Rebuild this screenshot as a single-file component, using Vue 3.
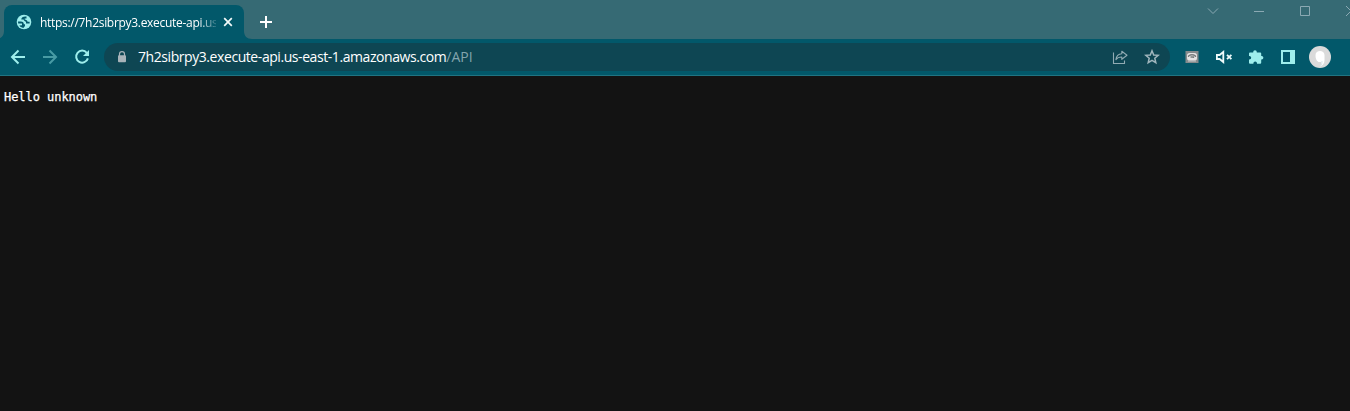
<script setup>
const host = '7h2sibrpy3.execute-api.us-east-1.amazonaws.com'
</script>

<template>
  <div class="browser">
    <header class="tabstrip">
      <div class="tab">
        <svg class="globe" width="16" height="16" viewBox="0 0 16 16">
          <circle cx="8" cy="8" r="7.300" fill="#9eeeec" />
          <path d="M2 7.600H4.800C7 7.600 7.800 8.600 7.800 10.300H9V12L7.300 14C5.500 13.600 4.200 12.800 3.300 11.500L6 11.300V9.500H2.200Z" fill="#02586a" />
          <path d="M10.500 2.500C7.200 2.200 5.300 3.400 5.300 5.500H7.600C8.200 7 9 7.300 10 7.700V9.600H13.600V7.700H11.600C11.200 6.300 10.300 5.800 8.700 5.500V4.500H10.500Z" fill="#02586a" />
        </svg>
        <span class="title">https://7h2sibrpy3.execute-api.us</span>
        <svg class="close" width="10" height="10" viewBox="0 0 10 10">
          <path d="M1.200 1.200 8.800 8.800M8.800 1.200 1.200 8.800" stroke="#f3fafa" stroke-width="1.700" />
        </svg>
        <svg class="flare" width="8" height="8" viewBox="0 0 8 8"><path d="M0 0C0 5 3 8 8 8H0Z" fill="#02586a" /></svg>
        <svg class="flare left" width="8" height="8" viewBox="0 0 8 8"><path d="M8 0C8 5 5 8 0 8H8Z" fill="#02586a" /></svg>
      </div>
      <svg class="plus" width="12" height="12" viewBox="0 0 12 12">
        <path d="M6 0V12M0 6H12" stroke="#fff" stroke-width="2" />
      </svg>
      <div class="controls">
        <svg width="12" height="12" viewBox="0 0 12 12"><path d="M1 3.500 6 8.500 11 3.500" /></svg>
        <svg width="12" height="12" viewBox="0 0 12 12"><path d="M1 6.500H11" /></svg>
        <svg width="12" height="12" viewBox="0 0 12 12"><path d="M1.500 1.500H10.500V10.500H1.500Z" /></svg>
        <svg width="12" height="12" viewBox="0 0 12 12"><path d="M1 1 11 11M11 1 1 11" /></svg>
      </div>
    </header>

    <nav class="toolbar">
      <div class="navigation">
        <svg width="16" height="16" viewBox="0 0 16 16"><path d="M15 8H2.500M8.500 1.500 2 8l6.500 6.500" /></svg>
        <svg class="dim" width="16" height="16" viewBox="0 0 16 16"><path d="M1 8H13.500M7.500 1.500 14 8l-6.500 6.500" /></svg>
        <svg width="16" height="16" viewBox="0 0 16 16">
          <path d="M12.800 3.800A6 6 0 1 0 13.900 9.400" />
          <path class="solid" d="M15 1V7H9Z" />
        </svg>
      </div>
      <div class="address">
        <svg class="lock" width="10" height="12" viewBox="0 0 10 12">
          <path d="M2.500 5V3a2.500 2.400 0 0 1 5 0v2" fill="none" stroke="#a8b3b9" stroke-width="1.200" />
          <rect x="1" y="4.300" width="8" height="7" rx="1" fill="#a8b3b9" />
        </svg>
        <span class="host">{{ host }}</span><span class="path">/API</span>
        <svg class="share" width="16" height="16" viewBox="0 0 16 16" fill="none" stroke="#91abb3" stroke-width="1.100">
          <path d="M1.500 3.500V14.500H12.500V11.500" />
          <path d="M9.800 2.200 15 6.200 9.800 10.300V8C7 8 5.200 8.700 3.900 10.600 4.300 7.200 6.300 5 9.800 4.700Z" stroke-linejoin="round" />
        </svg>
        <svg class="star" width="16" height="16" viewBox="0 0 16 16">
          <path d="M8 1.800 9.700 6 14.200 6.300 10.800 9.200 11.800 13.700 8 11.300 4.200 13.700 5.200 9.200 1.800 6.300 6.300 6Z" fill="none" stroke="#a0b6bd" stroke-width="1.500" />
        </svg>
      </div>
      <div class="actions">
        <svg width="16" height="16" viewBox="0 0 16 16">
          <rect x="1.500" y="2" width="13" height="12" fill="#858b8d" />
          <rect x="3" y="4" width="10" height="7.500" rx="2.500" fill="#e4e4e4" />
          <path d="M4.500 8V7Q8 4.500 11.500 7v1M6.500 8h3v1" fill="none" stroke="#777d7e" stroke-width="1.300" />
          <path d="M4 12h8" stroke="#c8cbcc" />
        </svg>
        <svg width="18" height="16" viewBox="0 0 18 16" fill="none" stroke="#eefafa" stroke-width="1.800">
          <path d="M1.900 6v4h2.700L8.300 13V3L4.600 6Z" />
          <path d="M12 5.800 16.400 10.200M16.400 5.800 12 10.200" />
        </svg>
        <svg width="16" height="16" viewBox="0 0 16 16">
          <path d="M2 3.500H5.200V3a1.800 1.800 0 0 1 3.600 0v.5h3.400a1 1 0 0 1 1 1V7H13.700a1.700 1.700 0 0 1 0 3.400h-.5v3.400a1 1 0 0 1-1 1H9v-.6a1.800 1.800 0 0 0-3.600 0v.6H2a1 1 0 0 1-1-1v-3.200h.4a1.800 1.800 0 0 0 0-3.600H1V4.500a1 1 0 0 1 1-1Z" fill="#9eeeec" />
        </svg>
        <svg width="16" height="16" viewBox="0 0 16 16">
          <path d="M1 1H15V15H1ZM3 3V13H10V3Z" fill="#9eeeec" fill-rule="evenodd" />
        </svg>
        <svg width="22" height="22" viewBox="0 0 22 22">
          <circle cx="11" cy="11" r="11" fill="#dadada" />
          <path d="M6.500 9C6.500 3.500 15.500 3.500 15.500 9V14C15.500 17 14 19.500 11 20.500 12 19 12.200 17.500 12 16H9.500C7 14.500 6.500 12 6.500 9Z" fill="#fff" />
          <path d="M11.500 20Q13.200 18.500 13 15" fill="none" stroke="#d4dee3" stroke-width="0.800" />
        </svg>
      </div>
    </nav>

    <main class="page"><pre>Hello unknown</pre></main>
  </div>
</template>

<style>
html, body { background: #131313; overflow: hidden; }
</style>

<style scoped>
.browser {
  width: 100%;
  height: 411px;
  display: flex;
  flex-direction: column;
  overflow: hidden;
  background: #131313;
  font-family: "Open Sans", "Noto Sans", sans-serif;
}
svg { display: block; flex: none; }
.tabstrip {
  height: 39px;
  flex: none;
  display: flex;
  align-items: flex-start;
  padding-left: 4px;
  background: #366a74;
}
.tab {
  position: relative;
  box-sizing: border-box;
  width: 240px;
  height: 34px;
  margin-top: 5px;
  padding-left: 12px;
  display: flex;
  align-items: center;
  border-radius: 8px 8px 0 0;
  background: #02586a;
}
.title {
  width: 176px;
  margin-left: 8px;
  white-space: nowrap;
  color: #fff;
  font-size: 12px;
  letter-spacing: -0.3px;
  mask-image: linear-gradient(to right, #000 158px, transparent 180px);
}
.close { margin-left: 7px; }
.flare { position: absolute; right: -8px; bottom: 0; }
.flare.left { right: auto; left: -8px; }
.plus { margin: 16px 0 0 16px; }
.controls {
  display: flex;
  gap: 34px;
  margin: 5px -7px 0 auto;
  fill: none;
  stroke: #8ba9b3;
  stroke-width: 1;
}
.toolbar {
  box-sizing: border-box;
  height: 37px;
  flex: none;
  display: flex;
  align-items: center;
  padding: 0 19px 0 10px;
  border-bottom: 1px solid #207482;
  background: #02586a;
}
.navigation {
  display: flex;
  gap: 16px;
  fill: none;
  stroke: #9eeeec;
  stroke-width: 2;
}
.dim { opacity: 0.45; }
.solid { fill: #9eeeec; stroke: none; }
.address {
  box-sizing: border-box;
  width: 1066px;
  height: 28px;
  margin-left: 14px;
  padding: 0 10px 0 13px;
  display: flex;
  align-items: center;
  border-radius: 14px;
  background: #0e4653;
  font-size: 14px;
  line-height: 18px;
  white-space: pre;
}
.host {
  margin-left: 11px;
  padding-bottom: 1px;
  color: #fff;
  letter-spacing: -0.43px;
}
.path { padding-bottom: 1px; color: #83a4ad; }
.share { margin-left: auto; }
.star { margin-left: 16px; }
.actions { display: flex; align-items: center; margin-left: 14px; gap: 16px; }
.actions svg:nth-child(2) { margin: 0 -1px; }
.actions svg:last-child { margin-left: -3px; }
.page { flex: 1; padding: 14px 4px 0; }
pre {
  margin: 0;
  color: #fff;
  font: 12px/15px "DejaVu Sans Mono", monospace;
  letter-spacing: -0.05px;
  -webkit-text-stroke: 0.25px #fff;
}
</style>
